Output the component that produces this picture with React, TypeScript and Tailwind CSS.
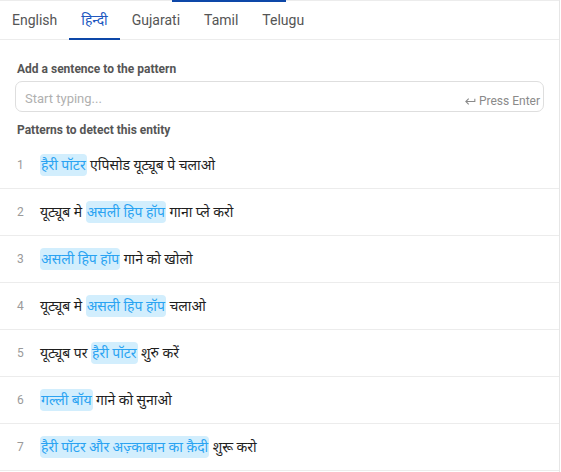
import { Fragment } from "react";

type TPart = { text: string; entity?: boolean };

const tabs = ["English", "हिन्दी", "Gujarati", "Tamil", "Telugu"];

const patterns: TPart[][] = [
  [{ text: "हैरी पॉटर", entity: true }, { text: "एपिसोड यूट्यूब पे चलाओ" }],
  [{ text: "यूट्यूब मे" }, { text: "असली हिप हॉप", entity: true }, { text: "गाना प्ले करो" }],
  [{ text: "असली हिप हॉप", entity: true }, { text: "गाने को खोलो" }],
  [{ text: "यूट्यूब मे" }, { text: "असली हिप हॉप", entity: true }, { text: "चलाओ" }],
  [{ text: "यूट्यूब पर" }, { text: "हैरी पॉटर", entity: true }, { text: "शुरु करें" }],
  [{ text: "गल्ली बॉय", entity: true }, { text: "गाने को सुनाओ" }],
  [{ text: "हैरी पॉटर और अज़्काबान का क़ैदी", entity: true }, { text: "शुरू करो" }],
];

const PatternRow = ({ index, parts }: { index: number; parts: TPart[] }) => {
  return (
    <div className="flex items-center h-[47px] border-b border-[#ececec] pl-[17px]">
      <span className="w-[23px] text-[12px] text-[#9a9a9a]">{index}</span>
      <span className="text-[14px] text-[#1e1e1e]">
        {parts.map((p, i) => (
          <Fragment key={i}>
            {i > 0 && " "}
            {p.entity ? (
              <span className="bg-[#d2eefd] text-[#2aa3f2] rounded-[4px] px-[1px] py-[3px]">
                {p.text}
              </span>
            ) : (
              p.text
            )}
          </Fragment>
        ))}
      </span>
    </div>
  );
};

const App = () => {
  return (
    <div
      className="w-[561px] h-[472px] bg-white overflow-hidden"
      style={{ fontFamily: "Roboto, 'Noto Sans', 'Noto Sans Devanagari', sans-serif" }}
    >
      <div className="w-[560px] h-full border-r border-[#e6e6e6]">
        {/* top edge of the panel above */}
        <div className="h-[2px] border-t border-[#ececec]">
          <div className="ml-[172px] w-[114px] h-[2px] -mt-px bg-[#0d47a8]" />
        </div>

        {/* tabs */}
        <div className="flex h-[38px] border-b border-[#ececec]">
          {tabs.map((t, i) => (
            <div
              key={t}
              className={
                i === 1
                  ? "flex items-center px-3 text-[14px] text-[#2057bf] border-b-2 border-[#0d47a8] -mb-px"
                  : "flex items-center px-3 text-[14px] text-[#555]"
              }
            >
              {t}
            </div>
          ))}
        </div>

        <div className="pt-[20px]">
          <div className="pl-[17px] text-[12px] font-bold text-[#555]">
            Add a sentence to the pattern
          </div>
          <div className="ml-[15px] w-[529px] h-[31px] mt-[3px] border border-[#dedede] rounded-[7px] flex items-start justify-between pl-[9px] pr-[3px]">
            <span className="mt-[7px] text-[13px] text-[#b0b0b0]">Start typing...</span>
            <span className="mt-[10px] flex items-center gap-[2px] text-[12px] text-[#8a8a8a]">
              <svg width="13" height="13" viewBox="0 0 24 24" fill="#8a8a8a">
                <path d="M19 7v4H5.83l3.58-3.59L8 6l-6 6 6 6 1.41-1.41L5.83 13H21V7z" />
              </svg>
              Press Enter
            </span>
          </div>
          <div className="pl-[17px] mt-[9px] text-[12px] font-bold text-[#555]">
            Patterns to detect this entity
          </div>
          <div className="mt-[3px]">
            {patterns.map((p, i) => (
              <PatternRow key={i} index={i + 1} parts={p} />
            ))}
          </div>
        </div>
      </div>
    </div>
  );
};

export default App;
